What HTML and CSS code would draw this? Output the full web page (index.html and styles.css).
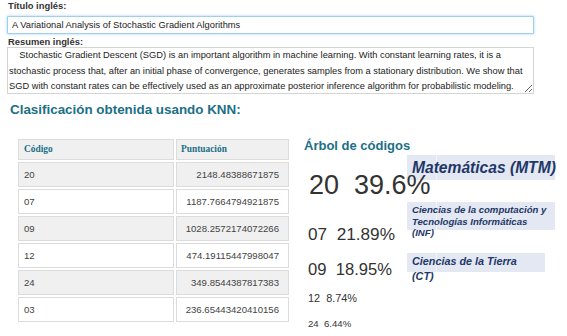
FILE: index.html
```html
<!DOCTYPE html>
<html lang="es">
<head>
    <meta charset="UTF-8">
    <meta name="viewport" content="width=device-width, initial-scale=1.0">
    <title>Clasificación KNN</title>
    <link rel="stylesheet" href="styles.css">
</head>
<body>
    <div class="form">
        <label class="field-label" for="titulo">Título inglés:</label>
        <input class="field-input" id="titulo" type="text" value="A Variational Analysis of Stochastic Gradient Algorithms">
        <label class="field-label label-gap" for="resumen">Resumen inglés:</label>
        <textarea class="field-area" id="resumen">    Stochastic Gradient Descent (SGD) is an important algorithm in machine learning. With constant learning rates, it is a
stochastic process that, after an initial phase of convergence, generates samples from a stationary distribution. We show that
SGD with constant rates can be effectively used as an approximate posterior inference algorithm for probabilistic modeling.</textarea>
    </div>

    <h2 class="section-title">Clasificación obtenida usando KNN:</h2>

    <div class="results">
        <table class="scores">
            <tr class="head">
                <th>Código</th>
                <th>Puntuación</th>
            </tr>
            <tr class="gray"><td>20</td><td class="num">2148.48388671875</td></tr>
            <tr><td>07</td><td class="num">1187.7664794921875</td></tr>
            <tr class="gray"><td>09</td><td class="num">1028.2572174072266</td></tr>
            <tr><td>12</td><td class="num">474.19115447998047</td></tr>
            <tr class="gray"><td>24</td><td class="num">349.8544387817383</td></tr>
            <tr><td>03</td><td class="num">236.65443420410156</td></tr>
        </table>

        <div class="tree">
            <h3 class="tree-title">Árbol de códigos</h3>
            <div class="node node-1">
                <span class="pct" style="font-size: 27px">20  39.6%</span>
                <span class="tag tag-1">Matemáticas (MTM)</span>
            </div>
            <div class="node node-2">
                <span class="pct" style="font-size: 17.2px">07  21.89%</span>
                <span class="tag tag-2">Ciencias de la computación y<br>Tecnologías Informáticas<br>(INF)</span>
            </div>
            <div class="node node-3">
                <span class="pct" style="font-size: 16.6px">09  18.95%</span>
                <span class="tag tag-3">Ciencias de la Tierra<br>(CT)</span>
            </div>
            <div class="node node-4">
                <span class="pct" style="font-size: 10.9px">12  8.74%</span>
            </div>
            <div class="node node-5">
                <span class="pct" style="font-size: 9.6px">24  6.44%</span>
            </div>
        </div>
    </div>
</body>
</html>
```

FILE: styles.css
```css
* {
    padding: 0;
    margin: 0;
    box-sizing: border-box;
}

body {
    width: 567px;
    height: 336px;
    overflow: hidden;
    background-color: #fff;
    font-family: "Liberation Sans", Arial, sans-serif;
    color: #333;
}

.form {
    margin-left: 7px;
    width: 527px;
}

.field-label {
    display: block;
    font-size: 9.4px;
    font-weight: bold;
    line-height: 12px;
    padding-left: 1px;
    color: #333;
}

.label-gap {
    margin-top: 2px;
    line-height: 11px;
}

.field-input {
    display: block;
    width: 100%;
    height: 18px;
    margin-top: 4px;
    padding: 0 4px;
    font-family: "Liberation Sans", Arial, sans-serif;
    font-size: 9.3px;
    color: #222;
    border: 1px solid #9fd0ea;
    box-shadow: 0 0 3px rgba(102, 175, 233, 0.6);
    border-radius: 1px;
    outline: none;
}

.field-area {
    display: block;
    width: 100%;
    height: 47px;
    padding: 0 1px;
    font-family: "Liberation Sans", Arial, sans-serif;
    font-size: 9.3px;
    line-height: 15.5px;
    color: #222;
    border: 1px solid #d4d4d4;
    resize: vertical;
    overflow: hidden;
}

.section-title {
    margin: 8px 0 0 10px;
    font-size: 13.4px;
    line-height: 16px;
    font-weight: bold;
    color: #206f86;
}

.results {
    display: flex;
    align-items: flex-start;
    margin-top: 19px;
}

.scores {
    margin-left: 16px;
    border-collapse: separate;
    border-spacing: 2px;
    font-size: 9.6px;
    color: #444;
}

.scores th,
.scores td {
    border: 1px solid #dcdcdc;
    padding: 0 9px 0 5px;
    text-align: left;
    line-height: 23px;
    white-space: nowrap;
}

.scores th {
    font-family: "Liberation Serif", "Times New Roman", serif;
    font-size: 9.4px;
    line-height: 19px;
    color: #206f86;
    background-color: #f0f0f0;
}

.scores th:first-child,
.scores td:first-child {
    width: 156px;
}

.scores th:last-child {
    width: 113px;
    padding-left: 4px;
}

.scores .gray td {
    background-color: #f0f0f0;
}

.scores .num {
    text-align: right;
}

.tree {
    margin-left: 13px;
}

.tree-title {
    margin-top: 1px;
    font-size: 13px;
    line-height: 16px;
    font-weight: bold;
    color: #206f86;
}

.node {
    display: grid;
    grid-template-columns: 103px 148px;
    align-items: start;
}

.pct {
    white-space: pre;
    padding-left: 4px;
    line-height: 1;
    color: #333;
    position: relative;
    z-index: 1;
}

.tag {
    display: block;
    padding-left: 5px;
    font-weight: bold;
    font-style: italic;
    color: #1e3766;
    white-space: nowrap;
    background: linear-gradient(to right, #e3e8f3 29px, #f0f3f9 29px, #f0f3f9 30px, #e3e8f3 30px);
}

.node-1 { margin-top: 1px; }
.node-1 .pct { margin-top: 17px; line-height: 27px; padding-left: 5px; }
.tag-1 {
    height: 25px;
    padding-top: 2px;
    font-size: 15.6px;
    line-height: 21px;
}

.node-2 { margin-top: 3px; }
.node-2 .pct { margin-top: 24px; line-height: 17px; }
.tag-2 {
    height: 28px;
    padding-top: 2px;
    font-size: 9.6px;
    line-height: 11.5px;
}

.node-3 { margin-top: 10px; }
.node-3 .pct { margin-top: 8px; line-height: 17px; }
.tag-3 {
    width: 138px;
    height: 19px;
    padding-top: 1px;
    font-size: 10.8px;
    line-height: 15px;
}

.node-4 { margin-top: 15px; }
.node-4 .pct { line-height: 11px; }

.node-5 { margin-top: 15px; }
.node-5 .pct { line-height: 10px; }
```
